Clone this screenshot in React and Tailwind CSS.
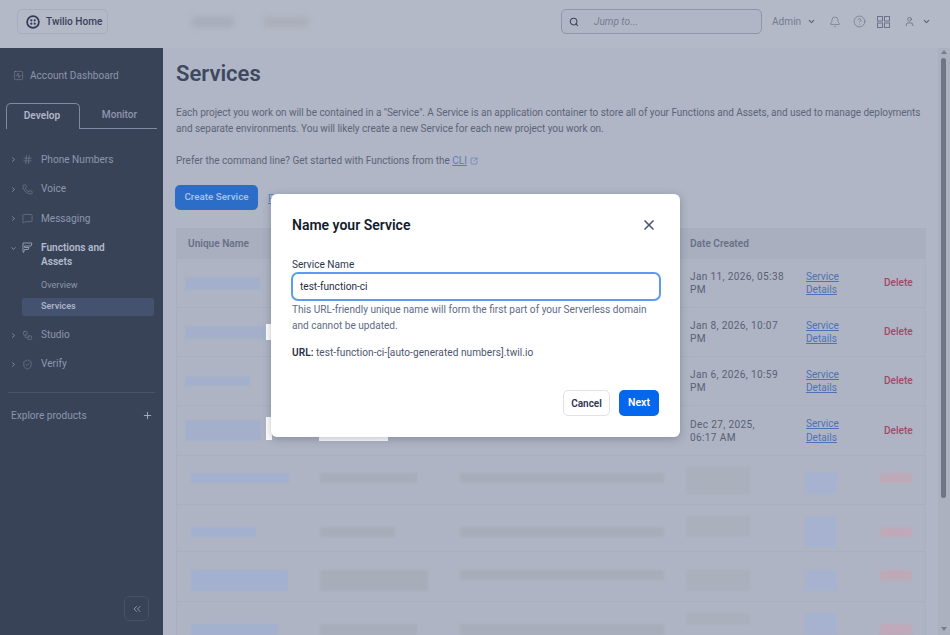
import { Search, ChevronDown, ChevronRight, ChevronsLeft, Bell, CircleHelp, User, X, Plus, Hash, Phone, MessageSquare, Workflow, ShieldCheck, SquareArrowOutUpRight, SquareActivity } from 'lucide-react'

function TwilioLogo() {
  return (
    <svg width="14" height="14" viewBox="0 0 14 14" fill="none" className="shrink-0">
      <circle cx="7" cy="7" r="5.9" stroke="#333b52" strokeWidth="1.7" />
      <circle cx="5.3" cy="5.3" r="1.1" fill="#333b52" />
      <circle cx="8.7" cy="5.3" r="1.1" fill="#333b52" />
      <circle cx="5.3" cy="8.7" r="1.1" fill="#333b52" />
      <circle cx="8.7" cy="8.7" r="1.1" fill="#333b52" />
    </svg>
  )
}

function GridIcon() {
  return (
    <svg width="13" height="12" viewBox="0 0 13 12" fill="none" stroke="#6c7389" strokeWidth="1">
      <rect x="0.5" y="0.5" width="5" height="4.5" />
      <rect x="7.5" y="0.5" width="5" height="4.5" />
      <rect x="0.5" y="7" width="5" height="4.5" />
      <rect x="7.5" y="7" width="5" height="4.5" />
    </svg>
  )
}

function FunctionsIcon() {
  return (
    <svg width="11" height="11" viewBox="0 0 11 11" fill="none" stroke="#97a0b5" strokeWidth="0.9">
      <path d="M1 1h9l-1 3H2.5v1.5H7L6.2 7.5H2.5L1.6 10.5 1 10z" />
    </svg>
  )
}

const navTop = [
  { label: 'Phone Numbers', Icon: Hash, cls: 'h-[29px]' },
  { label: 'Voice', Icon: Phone, cls: 'h-[30px]' },
  { label: 'Messaging', Icon: MessageSquare, cls: 'h-[29px]' },
]

const realRows = [
  { h: 'h-[49px]', nameBar: 'w-[76px] h-[13px]', date: ['Jan 11, 2026, 05:38', 'PM'] },
  { h: 'h-[49px]', nameBar: 'w-[80px] h-[13px]', date: ['Jan 8, 2026, 10:07', 'PM'] },
  { h: 'h-[49px]', nameBar: 'w-[65px] h-[10px]', date: ['Jan 6, 2026, 10:59', 'PM'] },
  { h: 'h-[50px]', nameBar: 'w-[76px] h-[21px]', date: ['Dec 27, 2025,', '06:17 AM'] },
]

const blurRows = [
  { h: 'h-[49px]', pt: 'pt-[17px]', name: 'w-[98px] h-[10px]', col2: 'w-[97px] h-[10px]', col3: 'h-[10px]', datePt: 'mt-[11px]', date: 'h-[27px]', detailsPt: 'mt-[16px]', details: 'h-[22px]', delete: 'h-[10px]' },
  { h: 'h-[47px]', pt: 'pt-[22px]', name: 'w-[65px] h-[10px]', col2: 'w-[75px] h-[10px]', col3: 'h-[10px]', datePt: 'mt-[11px]', date: 'h-[21px]', detailsPt: 'mt-[11px]', details: 'h-[31px]', delete: 'h-[10px]' },
  { h: 'h-[50px]', pt: 'pt-[18px]', name: 'w-[97px] h-[21px]', col2: 'w-[108px] h-[21px]', col3: 'h-[10px]', datePt: 'mt-[18px]', date: 'h-[21px]', detailsPt: 'mt-[18px]', details: 'h-[21px]', delete: 'h-[10px]' },
  { h: 'h-[50px]', pt: 'pt-[22px]', name: 'w-[87px] h-[11px]', col2: 'w-[97px] h-[11px]', col3: 'h-[11px]', datePt: 'mt-[11px]', date: 'h-[12px]', detailsPt: 'mt-[11px]', details: 'h-[22px]', delete: 'h-[11px]' },
]

const tableCols = 'grid grid-cols-[132px_140px_230px_116px_75px_1fr]'

export default function App() {
  return (
    <div className="relative flex h-[635px] w-[950px] flex-col overflow-hidden bg-[#b0b6c5] font-['Roboto',sans-serif] text-[10.1px] text-[#5d6479]">
      <header className="flex h-12 shrink-0 items-center bg-[#b4b9c8] pb-[5px]">
        <div className="ml-[17px] flex h-[25px] w-[91px] shrink-0 items-center gap-[6px] whitespace-nowrap rounded-[5px] border border-[#a7adbf] pl-2 font-medium text-[#39415a]">
          <TwilioLogo />
          <span>Twilio Home</span>
        </div>
        <div className="ml-[84px] h-[10px] w-[42px] shrink-0 bg-[#a7acba] blur-[3px]" />
        <div className="ml-[30px] h-[10px] w-[44px] shrink-0 bg-[#aaaeb8] blur-[3px]" />
        <div className="ml-[253px] flex h-[25px] w-[201px] shrink-0 items-center rounded-[5px] border border-[#8f96ab] bg-[#b1b6c6] pl-[7px] text-[#757c92]">
          <Search size={10} strokeWidth={2.5} className="text-[#3d4459]" />
          <span className="ml-[15px] italic">Jump to...</span>
        </div>
        <span className="ml-[10px] w-[31px] shrink-0 text-[#747b91]">Admin</span>
        <ChevronDown size={9} strokeWidth={3} className="ml-[4px] shrink-0 text-[#5b6279]" />
        <Bell size={12} strokeWidth={1.3} className="ml-[13px] shrink-0 text-[#6c7389]" />
        <CircleHelp size={13} strokeWidth={1.3} className="ml-[12px] shrink-0 text-[#6c7389]" />
        <div className="ml-[11px] shrink-0"><GridIcon /></div>
        <User size={11} strokeWidth={1.5} className="ml-[14px] shrink-0 text-[#5b6279]" />
        <ChevronDown size={9} strokeWidth={3} className="ml-[7px] shrink-0 text-[#5b6279]" />
      </header>

      <div className="flex min-h-0 flex-1">
        <aside className="relative flex w-[163px] shrink-0 flex-col bg-[#394358] text-[#8d96ac]">
          <div className="mt-[21px] flex h-[13px] items-center gap-[6px] pl-[13px]">
            <SquareActivity size={11} strokeWidth={1} />
            <span>Account Dashboard</span>
          </div>
          <div className="ml-[6px] mr-[6px] mt-[21px] flex h-[26px]">
            <div className="flex w-[74px] items-center justify-center rounded-t-[5px] border border-b-0 border-[#7e8aa3] pb-[1px] pr-[2px] font-semibold text-[#aeb6c9]">Develop</div>
            <div className="flex flex-1 items-center justify-center border-b border-[#7e8aa3] pb-[1px] pl-[2px] font-medium">Monitor</div>
          </div>
          <nav className="mt-[16px] flex flex-col">
            {navTop.map(({ label, Icon, cls }) => (
              <div key={label} className={`flex items-center pl-[10px] ${cls}`}>
                <ChevronRight size={7} strokeWidth={3} className="mr-[5px] w-[7px]" />
                <Icon size={11} strokeWidth={1} className="mr-[8px]" />
                <span>{label}</span>
              </div>
            ))}
            <div className="flex pl-[10px] pt-[8px]">
              <ChevronDown size={7} strokeWidth={3} className="mr-[5px] mt-[4px] w-[7px]" />
              <div className="mr-[8px] mt-[1px]"><FunctionsIcon /></div>
              <span className="font-semibold leading-[14px] text-[#b3bbce]">Functions and<br />Assets</span>
            </div>
            <div className="ml-[41px] mt-[11px] text-[9px] leading-[11px]">Overview</div>
            <div className="ml-[22px] mt-[7px] flex h-[18px] w-[132px] items-center rounded-[2px] bg-[#44526f] pl-[19px] text-[9px] font-semibold text-[#aab3c7]">Services</div>
            <div className="mt-[9px] flex h-[20px] items-center pl-[10px]">
              <ChevronRight size={7} strokeWidth={3} className="mr-[5px] w-[7px]" />
              <Workflow size={11} strokeWidth={1} className="mr-[8px]" />
              <span>Studio</span>
            </div>
            <div className="mt-[9px] flex h-[20px] items-center pl-[10px]">
              <ChevronRight size={7} strokeWidth={3} className="mr-[5px] w-[7px]" />
              <ShieldCheck size={11} strokeWidth={1} className="mr-[8px]" />
              <span>Verify</span>
            </div>
          </nav>
          <div className="mx-[8px] mt-[18px] border-t border-[#4a5468]" />
          <div className="mt-[15px] flex items-center justify-between pl-[11px] pr-[10px]">
            <span>Explore products</span>
            <Plus size={11} strokeWidth={2} className="text-[#aab3c7]" />
          </div>
          <div className="absolute bottom-[14px] left-[124px] flex h-[25px] w-[25px] items-center justify-center rounded-[5px] border border-[#465066] text-[#a3acc0]">
            <ChevronsLeft size={12} strokeWidth={1.5} />
          </div>
        </aside>

        <main className="min-w-0 flex-1 overflow-hidden pl-[13px]">
          <h1 className="mt-[13px] text-[22px] font-semibold leading-[26px] text-[#3e4860]">Services</h1>
          <p className="mt-[18px] w-[750px] text-[10px] leading-[16px] tracking-[-0.035px]">Each project you work on will be contained in a "Service". A Service is an application container to store all of your Functions and Assets, and used to manage deployments and separate environments. You will likely create a new Service for each new project you work on.</p>
          <p className="mt-[16px] flex items-center text-[10px] leading-[16px]">
            <span>Prefer the command line? Get started with Functions from the&nbsp;</span>
            <span className="text-[#5a7cb8] underline">CLI</span>
            <SquareArrowOutUpRight size={8} className="ml-[3px] text-[#5a7cb8]" />
          </p>
          <div className="mt-[16px] flex items-start">
            <div className="-ml-px flex h-[25px] w-[83px] items-center justify-center rounded-[5px] bg-[#2c6dc8] text-[9.8px] font-semibold text-[#a9bfe0]">Create Service</div>
            <span className="ml-[10px] mt-[6px] text-[#5a7cb8] underline">Functions</span>
          </div>

          <div className="mt-[18px] w-[750px] border-x border-[#a9afbe]">
            <div className={`${tableCols} h-[31px] items-center border-y border-[#a9afbe] bg-[#a9afbe] font-semibold text-[#687088]`}>
              <span className="pl-[11px]">Unique Name</span>
              <span className="pl-[11px]">Friendly Name</span>
              <span className="pl-[11px]">Description</span>
              <span className="pl-[11px]">Date Created</span>
            </div>
            {realRows.map((row) => (
              <div key={row.date[0]} className={`${tableCols} ${row.h} items-center border-b border-[#a9afbe] bg-[#aeb4c3]`}>
                <div className="pl-2"><div className={`${row.nameBar} bg-[#a4b0cb] blur-[1px]`} /></div>
                <div />
                <div />
                <div className="pl-[11px] leading-[13px] tracking-[0.35px] text-[#596076]">{row.date[0]}<br />{row.date[1]}</div>
                <div className="pl-[11px] leading-[13.5px] text-[#4e72b6] underline">Service<br />Details</div>
                <div className="pl-[14px] font-medium text-[#a14a68]">Delete</div>
              </div>
            ))}
            {blurRows.map((row) => (
              <div key={row.h + row.name} className={`${tableCols} ${row.h} border-b border-[#a9afbe] bg-[#aeb4c3]`}>
                <div className={`pl-[14px] ${row.pt}`}><div className={`${row.name} bg-[#a3b0cf] blur-[1px]`} /></div>
                <div className={`pl-[11px] ${row.pt}`}><div className={`${row.col2} bg-[#a8adba] blur-[1px]`} /></div>
                <div className={`pl-[11px] ${row.pt}`}><div className={`${row.col3} w-[204px] bg-[#a8adba] blur-[1px]`} /></div>
                <div className="pl-[7px]"><div className={`${row.datePt} ${row.date} w-[64px] bg-[#abb0bd] blur-[1px]`} /></div>
                <div className="pl-[10px]"><div className={`${row.detailsPt} ${row.details} w-[32px] bg-[#a6b2cf] blur-[1px]`} /></div>
                <div className={`pl-[10px] ${row.pt}`}><div className={`${row.delete} w-[32px] bg-[#bfa9b8] blur-[1px]`} /></div>
              </div>
            ))}
          </div>
        </main>

        <div className="flex w-[12px] shrink-0 flex-col items-center bg-[#acb1c0] pr-[1px]">
          <div className="mt-[2px] h-0 w-0 border-x-[3px] border-b-[4px] border-x-transparent border-b-[#767c8e]" />
          <div className="mt-[4px] h-[440px] w-[5px] rounded-full bg-[#6f7587]" />
          <div className="mb-[4px] mt-auto h-0 w-0 border-x-[3px] border-t-[4px] border-x-transparent border-t-[#767c8e]" />
        </div>
      </div>

      <div className="absolute left-[266px] top-[324px] h-[16px] w-[6px] bg-white" />
      <div className="absolute left-[266px] top-[417px] h-[23px] w-[6px] bg-white" />
      <div className="absolute left-[319px] top-[430px] h-[11px] w-[69px] bg-white" />

      <div className="absolute left-[271px] top-[194px] flex h-[243px] w-[409px] flex-col rounded-[6px] bg-white pl-[21px] pr-[20px] shadow-[0_2px_8px_rgba(40,50,75,0.3)]">
        <div className="mt-[21px] flex items-center justify-between">
          <h2 className="text-[14px] font-semibold leading-[20px] text-[#121c2d]">Name your Service</h2>
          <X size={16} strokeWidth={2.5} className="mr-[3px] text-[#4b5671]" />
        </div>
        <label className="mt-[24px] leading-[12px] text-[#30384f]">Service Name</label>
        <div className="-ml-px mt-[1px] flex h-[29px] w-[370px] items-center rounded-[7px] border-2 border-[#5d9bf0] pl-[7px] text-[#262e47]">test-function-ci</div>
        <p className="mt-[1px] leading-[16px] text-[#606b85]">This URL-friendly unique name will form the first part of your Serverless domain and cannot be updated.</p>
        <p className="mt-[11px] leading-[16px] tracking-[0.05px] text-[#4d566f]"><span className="font-semibold text-[#2a324a]">URL:</span> test-function-ci-[auto-generated numbers].twil.io</p>
        <div className="mb-[21px] mt-auto flex justify-end gap-[9px]">
          <button className="h-[26px] w-[47px] rounded-[5px] border border-[#dfe2e8] bg-white text-[10px] font-semibold text-[#2e3650]">Cancel</button>
          <button className="mr-[1px] h-[26px] w-[40px] rounded-[5px] bg-[#0467ee] text-[10.5px] font-semibold text-white">Next</button>
        </div>
      </div>
    </div>
  )
}
